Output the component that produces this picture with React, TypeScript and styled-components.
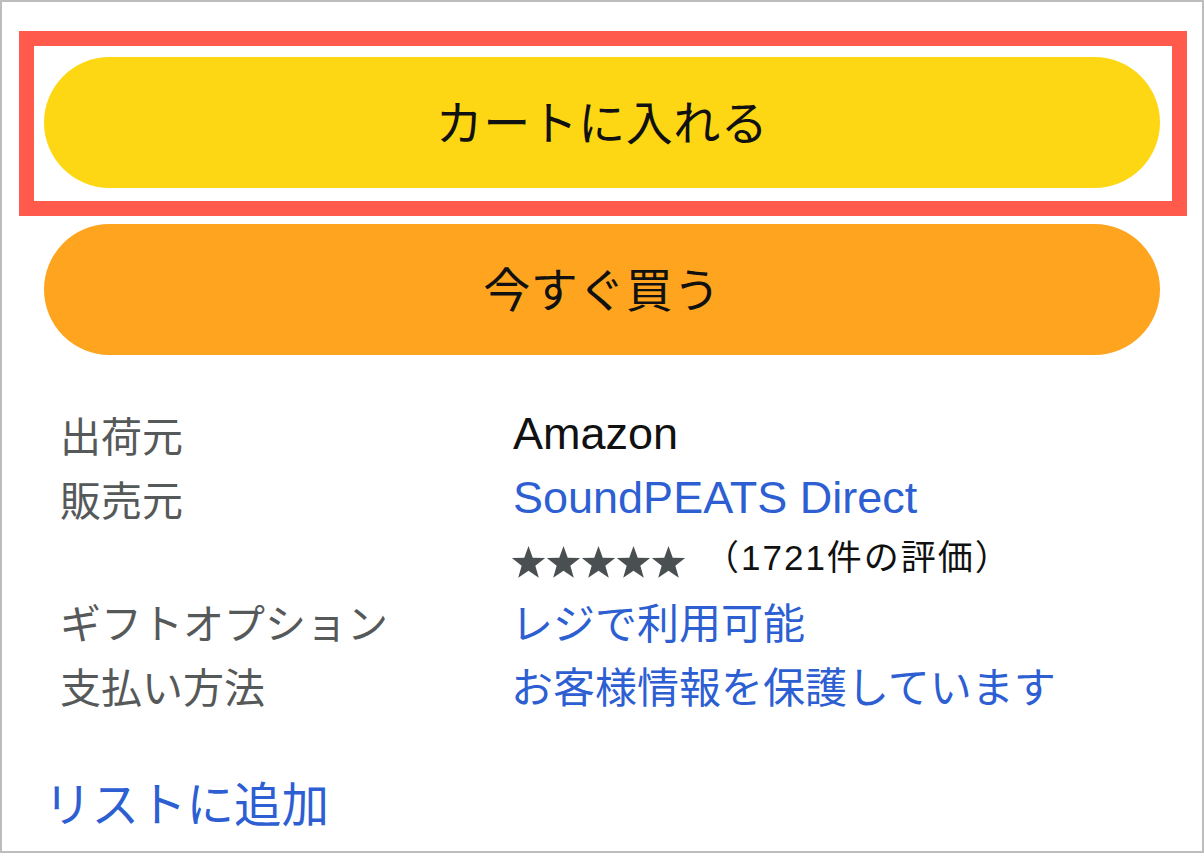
import React from 'react';
import styled, { createGlobalStyle } from 'styled-components';

const GlobalStyle = createGlobalStyle`
  body {
    margin: 0;
    background: #ffffff;
    font-family: "Noto Sans CJK JP", "Noto Sans", sans-serif;
  }
`;

const Frame = styled.div`
  width: 1204px;
  height: 853px;
  box-sizing: border-box;
  border: 2px solid #bdbdbd;
  background: #ffffff;
  padding: 29px 42px 0 42px;
  overflow: hidden;
`;

// red annotation box drawn round the cart button
const Highlight = styled.div`
  margin: 0 -27px 0 -25px;
  border: 15px solid #ff5a4c;
  padding: 11px 12px 13px 10px;
`;

const PillButton = styled.button<{ $bg: string }>`
  display: flex;
  align-items: center;
  justify-content: center;
  width: 100%;
  height: 131px;
  border: none;
  border-radius: 66px;
  background: ${({ $bg }) => $bg};
  color: #111111;
  font-family: "Noto Sans CJK JP", sans-serif;
  font-size: 47px;
  letter-spacing: 0.5px;
  padding: 0 0 6px 0;
  cursor: pointer;
`;

const BuyButton = styled(PillButton)`
  margin-top: 8px;
`;

const InfoGrid = styled.div`
  display: grid;
  grid-template-columns: 451px 1fr;
  margin-top: 47px;
  padding-left: 16px;
`;

const Label = styled.div<{ $h?: number }>`
  height: ${({ $h }) => $h ?? 64}px;
  line-height: ${({ $h }) => $h ?? 64}px;
  font-size: 41px;
  color: #565959;
  white-space: nowrap;
`;

const Value = styled.div<{ $h?: number; $latin?: boolean; $link?: boolean }>`
  height: ${({ $h }) => $h ?? 64}px;
  line-height: ${({ $h }) => $h ?? 64}px;
  font-size: ${({ $latin }) => ($latin ? 45 : 42)}px;
  font-family: ${({ $latin }) =>
    $latin ? '"Liberation Sans", "Noto Sans CJK JP", sans-serif' : '"Noto Sans CJK JP", sans-serif'};
  padding-left: ${({ $latin }) => ($latin ? 2 : 0)}px;
  color: ${({ $link }) => ($link ? '#2d5fd3' : '#111111')};
  white-space: nowrap;
`;

const RatingRow = styled.div`
  display: flex;
  align-items: center;
  height: 57px;
  margin-top: 3px;
`;

const ReviewCount = styled.span`
  margin-left: 16px;
  font-family: "Liberation Sans", "Noto Sans CJK JP", sans-serif;
  font-size: 35px;
  letter-spacing: 2px;
  color: #111111;
  line-height: 1;
  padding-bottom: 8px;
`;

const ListLink = styled.a`
  display: block;
  margin-top: 52px;
  line-height: 64px;
  font-size: 47.5px;
  color: #2d5fd3;
  text-decoration: none;
  cursor: pointer;
`;

const starPoints = (cx: number, cy: number, R: number, r: number) => {
  const pts: string[] = [];
  for (let i = 0; i < 10; i++) {
    const rad = i % 2 === 0 ? R : r;
    const a = (Math.PI / 5) * i - Math.PI / 2;
    pts.push(`${(cx + rad * Math.cos(a)).toFixed(2)},${(cy + rad * Math.sin(a)).toFixed(2)}`);
  }
  return pts.join(' ');
};

const Stars = () => (
  <svg width="177" height="34" viewBox="0 0 177 34">
    {[0, 1, 2, 3, 4].map((i) => (
      <polygon key={i} points={starPoints(17.5 + i * 35, 18.5, 17.5, 7.2)} fill="#4a4f52" />
    ))}
  </svg>
);

export default function App() {
  return (
    <>
      <GlobalStyle />
      <Frame>
        <Highlight>
          <PillButton $bg="#fdd714">カートに入れる</PillButton>
        </Highlight>
        <BuyButton $bg="#fea41e">今すぐ買う</BuyButton>

        <InfoGrid>
          <Label>出荷元</Label>
          <Value $latin>Amazon</Value>

          <Label>販売元</Label>
          <Value $latin $link>SoundPEATS Direct</Value>

          <Label $h={60} />
          <RatingRow>
            <Stars />
            <ReviewCount>（1721件の評価）</ReviewCount>
          </RatingRow>

          <Label $h={62}>ギフトオプション</Label>
          <Value $h={62} $link>レジで利用可能</Value>

          <Label $h={66}>支払い方法</Label>
          <Value $h={66} $link>お客様情報を保護しています</Value>
        </InfoGrid>

        <ListLink>リストに追加</ListLink>
      </Frame>
    </>
  );
}
